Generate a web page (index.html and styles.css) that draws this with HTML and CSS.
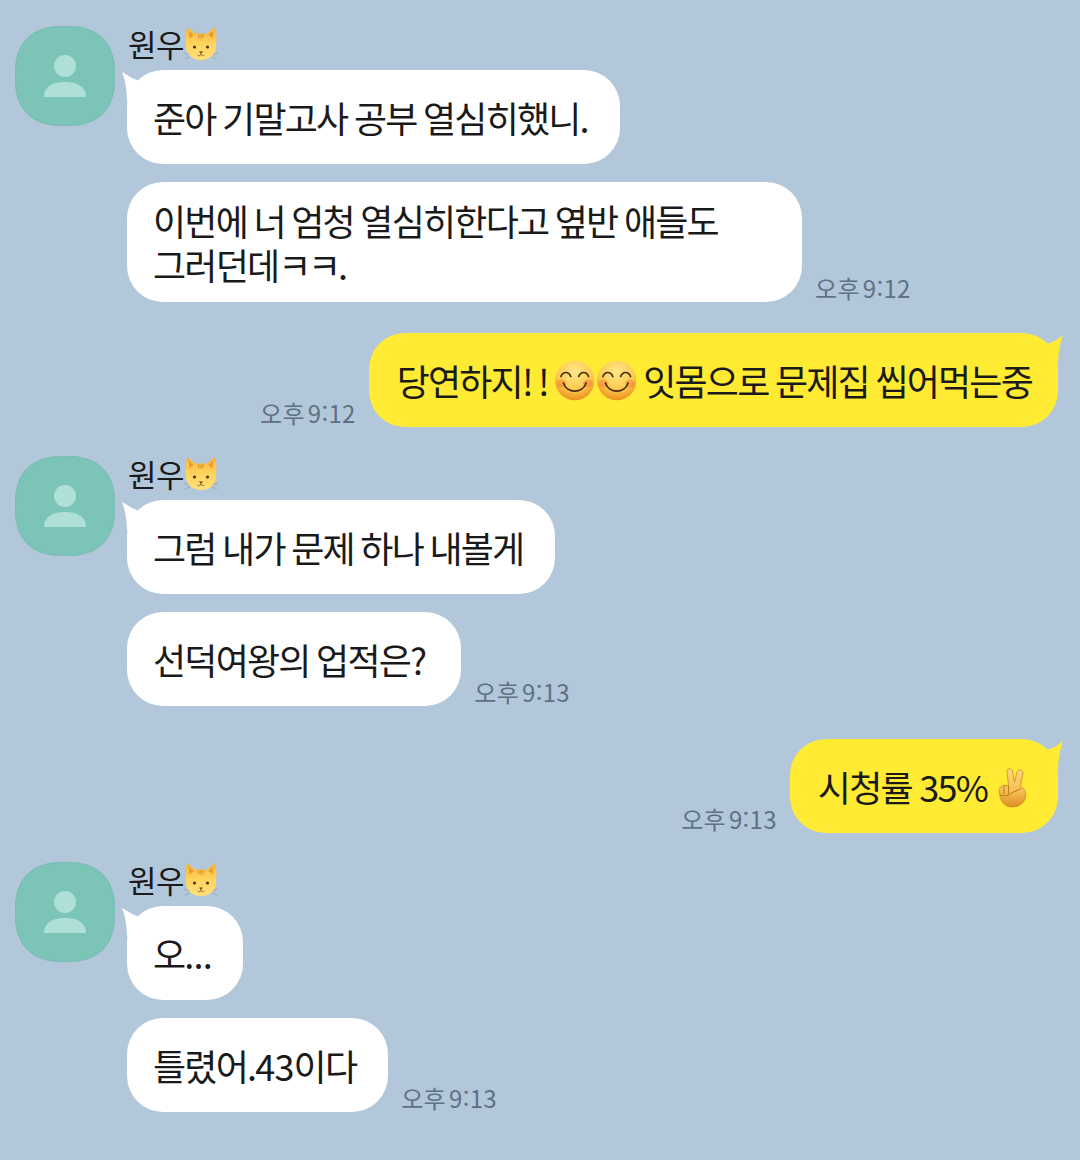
FILE: index.html
```html
<!DOCTYPE html>
<html lang="ko">
<head>
    <meta charset="UTF-8" />
    <title>채팅</title>
    <link rel="stylesheet" href="styles.css">
</head>
<body>
    <svg class="defs" aria-hidden="true">
        <defs>
            <radialGradient id="smileFill" cx="50%" cy="28%" r="75%">
                <stop offset="0" stop-color="#ffe88a" />
                <stop offset="0.6" stop-color="#fdc94e" />
                <stop offset="1" stop-color="#ea8a1a" />
            </radialGradient>
            <linearGradient id="catFill" x1="0" y1="0" x2="0" y2="1">
                <stop offset="0" stop-color="#f4b23c" />
                <stop offset="0.5" stop-color="#fed45c" />
                <stop offset="1" stop-color="#ffe07a" />
            </linearGradient>
            <linearGradient id="handFill" x1="0" y1="0" x2="0" y2="1">
                <stop offset="0" stop-color="#fcd87e" />
                <stop offset="0.6" stop-color="#f5bd50" />
                <stop offset="1" stop-color="#dc8e22" />
            </linearGradient>
            <symbol id="avatar" viewBox="0 0 100 100">
                <path d="M50 0C84 0 100 16 100 50C100 84 84 100 50 100C16 100 0 84 0 50C0 16 16 0 50 0Z" fill="#7cc4b8" stroke="#6db3aa" stroke-width="0.6" />
                <circle cx="50" cy="40" r="11" fill="#aee0d8" />
                <path d="M29 71C29 60 39 56 50 56C61 56 71 60 71 71Z" fill="#aee0d8" />
            </symbol>
            <symbol id="cat" viewBox="0 0 34 36">
                <path d="M3 1C6 3 9 6 12 8C15 7 19 7 22 8C25 6 28 3 31 1C32 6 33 12 32 18C33 27 27 34 17 34C7 34 1 27 2 18C1 12 2 6 3 1Z" fill="url(#catFill)" />
                <path d="M5 5L9.500 9L5.500 12.500Z" fill="#e79a30" />
                <path d="M29 5L24.500 9L28.500 12.500Z" fill="#e79a30" />
                <path d="M14.500 8L15 12M17 8V13M19.500 8L19 12" stroke="#dc8c28" stroke-width="1" fill="none" />
                <circle cx="10.500" cy="21" r="1.600" fill="#4f3410" />
                <circle cx="23.500" cy="21" r="1.600" fill="#4f3410" />
                <path d="M15 25.500H19L17 28Z" fill="#6b3f14" />
                <path d="M17 28C16.500 30 14.500 30 13.500 29M17 28C17.500 30 19.500 30 20.500 29" stroke="#6b3f14" stroke-width="0.7" fill="none" />
                <path d="M0 27L5 28.500M1 33L6 31M34 27L29 28.500M33 33L28 31" stroke="#7f7f70" stroke-width="0.4" fill="none" />
            </symbol>
            <symbol id="smile" viewBox="0 0 40 40">
                <circle cx="20" cy="20" r="20" fill="url(#smileFill)" />
                <ellipse cx="6.500" cy="23" rx="5" ry="4" fill="#f47a3c" opacity="0.5" />
                <ellipse cx="33.500" cy="23" rx="5" ry="4" fill="#f47a3c" opacity="0.5" />
                <path d="M6 16C8 10.500 14 10.500 16 16M24 16C26 10.500 32 10.500 34 16" stroke="#4a2c10" stroke-width="1.700" stroke-linecap="round" fill="none" />
                <path d="M8.500 22.500C12 33.500 28 33.500 31.500 22.500" stroke="#4a2c10" stroke-width="1.700" stroke-linecap="round" fill="none" />
            </symbol>
            <symbol id="peace" viewBox="0 0 32 40">
                <path d="M10 3C10 0 15 0 15.500 3L17.500 14L20 4C21 1 26 1 26 5L23.500 18C27 20 29.500 24 28.500 29C27.500 35 22 39 15 39C8 39 4 34 3 28C2 25 2 20 4 18.500C6 17 9 17 11.500 18Z" fill="url(#handFill)" stroke="#c77f1e" stroke-width="0.7" />
                <path d="M7 17.500V26M3 27C6 28 9 28 11 27M11.500 18V26" stroke="#b56f18" stroke-width="0.9" fill="none" />
                <path d="M10.500 28C14 24 20 23 24 20.500" stroke="#b56f18" stroke-width="0.9" fill="none" />
            </symbol>
        </defs>
    </svg>

    <main class="chat">
        <section class="group">
            <svg class="avatar"><use href="#avatar" /></svg>
            <div class="msgs">
                <div class="name">원우<svg class="emoji-cat"><use href="#cat" /></svg></div>
                <div class="row"><div class="bubble first">준아 기말고사 공부 열심히했니.</div></div>
                <div class="row">
                    <div class="bubble wide">이번에 너 엄청 열심히한다고 옆반 애들도<br />그러던데<span class="kk">ㅋㅋ</span>.</div>
                    <span class="time">오후 9:12</span>
                </div>
            </div>
        </section>

        <div class="row mine">
            <span class="time">오후 9:12</span>
            <div class="bubble me">당연하지<span class="bang">!!</span><svg class="emoji-smile"><use href="#smile" /></svg><svg class="emoji-smile"><use href="#smile" /></svg>잇몸으로 문제집 씹어먹는중</div>
        </div>

        <section class="group">
            <svg class="avatar"><use href="#avatar" /></svg>
            <div class="msgs">
                <div class="name">원우<svg class="emoji-cat"><use href="#cat" /></svg></div>
                <div class="row"><div class="bubble first">그럼 내가 문제 하나 내볼게</div></div>
                <div class="row">
                    <div class="bubble quiz">선덕여왕의 업적은?</div>
                    <span class="time">오후 9:13</span>
                </div>
            </div>
        </section>

        <div class="row mine mine-low">
            <span class="time">오후 9:13</span>
            <div class="bubble me peace">시청률 35%<svg class="emoji-peace"><use href="#peace" /></svg></div>
        </div>

        <section class="group">
            <svg class="avatar"><use href="#avatar" /></svg>
            <div class="msgs">
                <div class="name">원우<svg class="emoji-cat"><use href="#cat" /></svg></div>
                <div class="row"><div class="bubble first short">오<span class="dots">...</span></div></div>
                <div class="row">
                    <div class="bubble">틀렸어.<span class="num">43</span>이다</div>
                    <span class="time">오후 9:13</span>
                </div>
            </div>
        </section>
    </main>
</body>
</html>
```

FILE: styles.css
```css
body {
    margin: 0;
    background-color: #b2c7da;
    font-family: "Noto Sans CJK KR", "Noto Sans", sans-serif;
    color: #1a1a1a;
}
.defs {
    display: block;
    width: 0;
    height: 0;
}
.chat {
    padding-top: 26px;
}
.group {
    display: flex;
    gap: 12px;
    padding-left: 15px;
}
.avatar {
    width: 100px;
    height: 100px;
    flex: none;
}
.msgs {
    display: flex;
    flex-direction: column;
    gap: 18px;
}
.name {
    display: flex;
    align-items: center;
    height: 36px;
    margin-bottom: -10px;
    padding-left: 1px;
    font-size: 31px;
    line-height: 34px;
    letter-spacing: -0.5px;
}
.emoji-cat {
    width: 34px;
    height: 36px;
}
.row {
    display: flex;
    align-items: flex-end;
    gap: 13px;
}
.bubble {
    position: relative;
    padding: 25px 32px 25px 26px;
    background-color: #fff;
    border-radius: 36px;
    font-size: 36px;
    line-height: 44px;
    letter-spacing: -1.8px;
    word-spacing: -1.8px;
    white-space: nowrap;
}
.bubble.first::before {
    content: "";
    position: absolute;
    left: -5px;
    top: 1px;
    width: 30px;
    height: 40px;
    background-color: #fff;
    clip-path: path("M0 1C4 3 9 7 15 9L20 20L5 30C5 20 3 8 0 1Z");
}
.wide {
    width: 617px;
    padding-top: 16px;
    padding-bottom: 16px;
}
.kk {
    letter-spacing: -3.300px;
}
.quiz {
    padding-right: 36px;
}
.short {
    width: 58px;
}
.dots {
    letter-spacing: -0.800px;
}
.num {
    letter-spacing: -0.800px;
}
.time {
    font-size: 24px;
    line-height: 28px;
    color: #5f7183;
    letter-spacing: 0.3px;
    word-spacing: -4px;
}
.mine {
    justify-content: flex-end;
    margin: 31px 22px 29px 0;
}
.mine-low {
    margin-top: 33px;
}
.me {
    display: flex;
    align-items: center;
    background-color: #ffeb33;
    padding-left: 28px;
    padding-right: 26px;
}
.me::before {
    content: "";
    position: absolute;
    right: -5px;
    top: 2px;
    width: 30px;
    height: 40px;
    background-color: #ffeb33;
    clip-path: path("M30 0C26 3 21 7 14 9L8 20L25 30C25 20 27 8 30 0Z");
}
.bang {
    letter-spacing: 4.500px;
}
.emoji-smile {
    width: 39.500px;
    height: 41px;
    margin: 0 1px;
}
.emoji-smile + .emoji-smile {
    margin-right: 7px;
}
.peace {
    padding-left: 28px;
    padding-right: 29px;
    word-spacing: -0.8px;
}
.emoji-peace {
    width: 32px;
    height: 40px;
    margin: 4px 0 0 10px;
}
```
